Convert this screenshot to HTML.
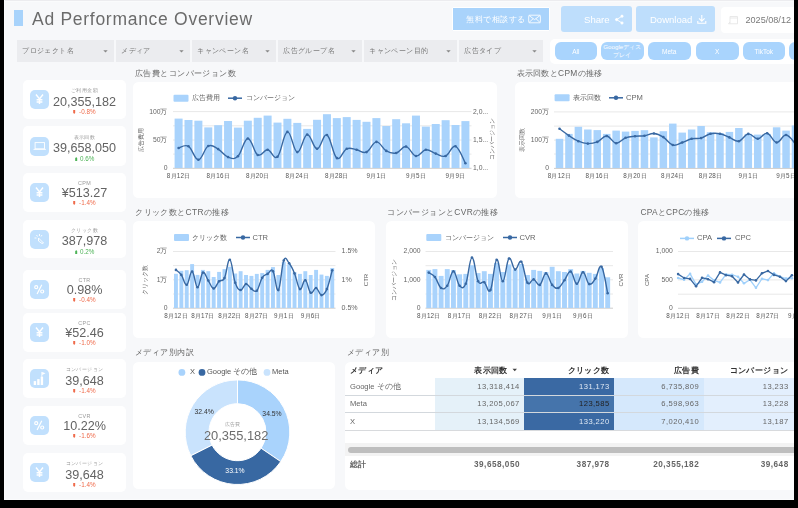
<!DOCTYPE html><html><head><meta charset="utf-8"><style>
html,body{margin:0;padding:0;}
body{width:798px;height:508px;position:relative;overflow:hidden;background:#f7f8fa;font-family:"Liberation Sans", sans-serif;}
div{box-sizing:border-box;}
svg{position:absolute;left:0;top:0;overflow:visible}
</style></head><body>
<div style="position:absolute;left:0px;top:0px;width:798px;height:1px;background:#ececef;border-radius:0px;"></div>
<div style="position:absolute;left:0px;top:1px;width:798px;height:1px;background:#fafbfc;border-radius:0px;"></div>
<div style="position:absolute;left:14px;top:10px;width:9px;height:16px;background:#a8d3fb;border-radius:0px;"></div>
<div style="position:absolute;left:452px;top:7px;width:98px;height:24px;background:#a9d3fb;border-radius:1px;border:1px solid #fff;"></div>
<svg width="798" height="508"><g fill="none" stroke="#fff" stroke-width="0.85"><rect x="528.7" y="15.2" width="11.7" height="7.6" rx="1"/><path d="M528.9 15.4 L534.55 19.6 L540.2 15.4 M528.9 22.6 L533.2 18.6 M540.2 22.6 L535.9 18.6"/></g></svg>
<div style="position:absolute;left:561px;top:6px;width:71px;height:26px;background:#bedefc;border-radius:3px;"></div>
<svg width="798" height="508"><g fill="#fff" stroke="#fff" stroke-width="0.9"><circle cx="622" cy="16.2" r="1.1"/><circle cx="616.6" cy="19.6" r="1.1"/><circle cx="622" cy="23" r="1.1"/><path d="M622 16.2 L616.6 19.6 L622 23" fill="none"/></g></svg>
<div style="position:absolute;left:636px;top:6px;width:79px;height:26px;background:#bedefc;border-radius:3px;"></div>
<svg width="798" height="508"><g fill="none" stroke="#fff" stroke-width="1.1"><path d="M701.8 15 V21 M699 18.3 L701.8 21.1 L704.6 18.3 M697.8 21 V23.3 H705.8 V21"/></g></svg>
<div style="position:absolute;left:721px;top:7px;width:80px;height:26px;background:#ffffff;border-radius:4px;"></div>
<svg width="798" height="508"><g fill="none" stroke="#e6e6e6" stroke-width="0.9"><path d="M730 16.5 H737.5 V23.8 H730 Z M730 18 H737.5 M730 22 L728.5 23.8 H730"/></g></svg>
<div style="position:absolute;left:17px;top:40px;width:97px;height:22.4px;background:#ebecef;border-radius:0px;"></div>
<svg width="798" height="508"><path d="M103.3 50.2 L107.7 50.2 L105.5 52.5 Z" fill="#888"/></svg>
<div style="position:absolute;left:116px;top:40px;width:74px;height:22.4px;background:#ebecef;border-radius:0px;"></div>
<svg width="798" height="508"><path d="M179.3 50.2 L183.7 50.2 L181.5 52.5 Z" fill="#888"/></svg>
<div style="position:absolute;left:192px;top:40px;width:84px;height:22.4px;background:#ebecef;border-radius:0px;"></div>
<svg width="798" height="508"><path d="M265.3 50.2 L269.7 50.2 L267.5 52.5 Z" fill="#888"/></svg>
<div style="position:absolute;left:278px;top:40px;width:84px;height:22.4px;background:#ebecef;border-radius:0px;"></div>
<svg width="798" height="508"><path d="M351.3 50.2 L355.7 50.2 L353.5 52.5 Z" fill="#888"/></svg>
<div style="position:absolute;left:364px;top:40px;width:93px;height:22.4px;background:#ebecef;border-radius:0px;"></div>
<svg width="798" height="508"><path d="M446.3 50.2 L450.7 50.2 L448.5 52.5 Z" fill="#888"/></svg>
<div style="position:absolute;left:459px;top:40px;width:84px;height:22.4px;background:#ebecef;border-radius:0px;"></div>
<svg width="798" height="508"><path d="M532.3 50.2 L536.7 50.2 L534.5 52.5 Z" fill="#888"/></svg>
<div style="position:absolute;left:550px;top:39px;width:250px;height:25px;background:#ffffff;border-radius:5px;"></div>
<div style="position:absolute;left:554.5px;top:42.3px;width:42.5px;height:18.2px;background:#a9d4fd;border-radius:6px;"></div>
<div style="position:absolute;left:601px;top:42.3px;width:42.5px;height:18.2px;background:#a9d4fd;border-radius:6px;"></div>
<div style="position:absolute;left:601px;top:42.6px;width:42.5px;text-align:center;font-size:6.2px;line-height:8.6px;color:#fff;white-space:nowrap;overflow:hidden;">Googleディス<br>プレイ</div>
<div style="position:absolute;left:648px;top:42.3px;width:42.5px;height:18.2px;background:#a9d4fd;border-radius:6px;"></div>
<div style="position:absolute;left:696px;top:42.3px;width:42.5px;height:18.2px;background:#a9d4fd;border-radius:6px;"></div>
<div style="position:absolute;left:742.5px;top:42.3px;width:42.5px;height:18.2px;background:#a9d4fd;border-radius:6px;"></div>
<div style="position:absolute;left:789px;top:42.3px;width:42.5px;height:18.2px;background:#a9d4fd;border-radius:6px;"></div>
<div style="position:absolute;left:23px;top:80px;width:103px;height:39px;background:#ffffff;border-radius:5px;"></div>
<div style="position:absolute;left:30px;top:90.0px;width:19px;height:19px;background:#c1e0fd;border-radius:5px;"></div>
<svg width="798" height="508"><g stroke="#fff" stroke-width="1.45" fill="none"><path d="M36.0 94.5 L39.5 98.9 L43.0 94.5 M39.5 98.9 V104.1 M36.6 99.7 H42.4 M36.6 102.0 H42.4"/></g></svg>
<div style="position:absolute;left:23px;top:126px;width:103px;height:40px;background:#ffffff;border-radius:5px;"></div>
<div style="position:absolute;left:30px;top:136.5px;width:19px;height:19px;background:#c1e0fd;border-radius:5px;"></div>
<svg width="798" height="508"><g stroke="#fff" stroke-width="0.9" fill="none"><rect x="35.1" y="142.6" width="9.4" height="6.2"/><path d="M33.5 149.4 H45.9"/></g></svg>
<div style="position:absolute;left:23px;top:173px;width:103px;height:39px;background:#ffffff;border-radius:5px;"></div>
<div style="position:absolute;left:30px;top:183.0px;width:19px;height:19px;background:#c1e0fd;border-radius:5px;"></div>
<svg width="798" height="508"><g stroke="#fff" stroke-width="1.45" fill="none"><path d="M36.0 187.5 L39.5 191.9 L43.0 187.5 M39.5 191.9 V197.1 M36.6 192.7 H42.4 M36.6 195.0 H42.4"/></g></svg>
<div style="position:absolute;left:23px;top:220px;width:103px;height:38px;background:#ffffff;border-radius:5px;"></div>
<div style="position:absolute;left:30px;top:229.5px;width:19px;height:19px;background:#c1e0fd;border-radius:5px;"></div>
<svg width="798" height="508"><g stroke="#fff" stroke-width="0.9" fill="none"><path d="M38.5 238.0 L43.5 243.0 L42.0 243.5 L38.5 241.0 Z M36.5 235.0 L37.5 236.5 M34.5 238.0 L36.5 238.0 M39.5 234.0 L39.5 236.0 M42.0 235.0 L41.0 236.5"/></g></svg>
<div style="position:absolute;left:23px;top:270px;width:103px;height:39px;background:#ffffff;border-radius:5px;"></div>
<div style="position:absolute;left:30px;top:280.0px;width:19px;height:19px;background:#c1e0fd;border-radius:5px;"></div>
<svg width="798" height="508"><g stroke="#fff" stroke-width="1.2" fill="none"><circle cx="36.2" cy="287.2" r="1.5"/><circle cx="42.2" cy="291.5" r="1.5"/><path d="M41.8 284.7 L37.1 294.1"/></g></svg>
<div style="position:absolute;left:23px;top:313px;width:103px;height:39px;background:#ffffff;border-radius:5px;"></div>
<div style="position:absolute;left:30px;top:323.0px;width:19px;height:19px;background:#c1e0fd;border-radius:5px;"></div>
<svg width="798" height="508"><g stroke="#fff" stroke-width="1.45" fill="none"><path d="M36.0 327.5 L39.5 331.9 L43.0 327.5 M39.5 331.9 V337.1 M36.6 332.7 H42.4 M36.6 335.0 H42.4"/></g></svg>
<div style="position:absolute;left:23px;top:359px;width:103px;height:39px;background:#ffffff;border-radius:5px;"></div>
<div style="position:absolute;left:30px;top:369.0px;width:19px;height:19px;background:#c1e0fd;border-radius:5px;"></div>
<svg width="798" height="508"><g fill="#fff"><rect x="33.7" y="381.1" width="2.4" height="3.9"/><rect x="37.2" y="379.1" width="2.4" height="5.9"/><rect x="40.7" y="376.7" width="2.4" height="8.3"/><rect x="41.4" y="371.9" width="0.9" height="5"/><path d="M42.1 371.9 L45.5 373.3 L42.1 374.9 Z"/></g></svg>
<div style="position:absolute;left:23px;top:406px;width:103px;height:39px;background:#ffffff;border-radius:5px;"></div>
<div style="position:absolute;left:30px;top:416.0px;width:19px;height:19px;background:#c1e0fd;border-radius:5px;"></div>
<svg width="798" height="508"><g stroke="#fff" stroke-width="1.2" fill="none"><circle cx="36.2" cy="423.2" r="1.5"/><circle cx="42.2" cy="427.5" r="1.5"/><path d="M41.8 420.7 L37.1 430.1"/></g></svg>
<div style="position:absolute;left:23px;top:453px;width:103px;height:39px;background:#ffffff;border-radius:5px;"></div>
<div style="position:absolute;left:30px;top:463.0px;width:19px;height:19px;background:#c1e0fd;border-radius:5px;"></div>
<svg width="798" height="508"><g stroke="#fff" stroke-width="1.45" fill="none"><path d="M36.0 467.5 L39.5 471.9 L43.0 467.5 M39.5 471.9 V477.1 M36.6 472.7 H42.4 M36.6 475.0 H42.4"/></g></svg>
<div style="position:absolute;left:133px;top:81.5px;width:363.5px;height:116.5px;background:#ffffff;border-radius:5.5px;"></div>
<div style="position:absolute;left:514.5px;top:81.5px;width:300px;height:116.5px;background:#ffffff;border-radius:5.5px;"></div>
<div style="position:absolute;left:133px;top:221px;width:242.3px;height:117.4px;background:#ffffff;border-radius:5.5px;"></div>
<div style="position:absolute;left:386px;top:221px;width:241.5px;height:117.4px;background:#ffffff;border-radius:5.5px;"></div>
<div style="position:absolute;left:638.3px;top:221px;width:200px;height:117.2px;background:#ffffff;border-radius:5.5px;"></div>
<div style="position:absolute;left:133px;top:361.6px;width:201.6px;height:127.8px;background:#ffffff;border-radius:5.5px;"></div>
<div style="position:absolute;left:345px;top:361.6px;width:460px;height:128.4px;background:#ffffff;border-radius:5.5px;"></div>
<div style="position:absolute;left:434.7px;top:378px;width:89px;height:52.2px;background:#e5f1f9;border-radius:0px;"></div>
<div style="position:absolute;left:523.7px;top:378px;width:90px;height:17.1px;background:#3a69a3;border-radius:0px;"></div>
<div style="position:absolute;left:523.7px;top:395.1px;width:90px;height:17.3px;background:#4574ab;border-radius:0px;"></div>
<div style="position:absolute;left:523.7px;top:412.4px;width:90px;height:17.8px;background:#3a69a3;border-radius:0px;"></div>
<div style="position:absolute;left:613.7px;top:378px;width:90.1px;height:52.2px;background:#d5e8fc;border-radius:0px;"></div>
<div style="position:absolute;left:703.8px;top:378px;width:100px;height:52.2px;background:#e3effd;border-radius:0px;"></div>
<div style="position:absolute;left:345px;top:394.6px;width:460px;height:1px;background:#d3d8dd;border-radius:0px;"></div>
<div style="position:absolute;left:345px;top:411.9px;width:460px;height:1px;background:#d3d8dd;border-radius:0px;"></div>
<div style="position:absolute;left:345px;top:429.7px;width:460px;height:1px;background:#d8dadd;border-radius:0px;"></div>
<svg width="798" height="508"><path d="M512.5 368.8 L517 368.8 L514.75 371.3 Z" fill="#444"/></svg>
<div style="position:absolute;left:345px;top:443px;width:460px;height:13px;background:#f3f3f3;border-radius:0px;"></div>
<div style="position:absolute;left:347.5px;top:446.5px;width:450px;height:6.5px;background:#bebebe;border-radius:3.2px;"></div>
<svg width="798" height="508"><rect x="173.5" y="94.7" width="15" height="7" rx="1" fill="#a9d3fc"/><line x1="228" y1="98.2" x2="242" y2="98.2" stroke="#3868a2" stroke-width="1.5"/><circle cx="235" cy="98.2" r="2.2" fill="#3868a2"/><line x1="173" y1="111.6" x2="471.5" y2="111.6" stroke="#e8e8e8" stroke-width="1"/><line x1="173" y1="125.8" x2="471.5" y2="125.8" stroke="#e8e8e8" stroke-width="1"/><line x1="173" y1="140" x2="471.5" y2="140" stroke="#e8e8e8" stroke-width="1"/><line x1="173" y1="154.1" x2="471.5" y2="154.1" stroke="#e8e8e8" stroke-width="1"/><line x1="173" y1="168.3" x2="471.5" y2="168.3" stroke="#ccc" stroke-width="1"/><rect x="174.60" y="118.60" width="8.00" height="49.40" fill="#a9d3fc"/><rect x="184.49" y="120.00" width="8.00" height="48.00" fill="#a9d3fc"/><rect x="194.38" y="120.70" width="8.00" height="47.30" fill="#a9d3fc"/><rect x="204.27" y="127.40" width="8.00" height="40.60" fill="#a9d3fc"/><rect x="214.16" y="125.20" width="8.00" height="42.80" fill="#a9d3fc"/><rect x="224.05" y="121.00" width="8.00" height="47.00" fill="#a9d3fc"/><rect x="233.94" y="127.60" width="8.00" height="40.40" fill="#a9d3fc"/><rect x="243.83" y="120.70" width="8.00" height="47.30" fill="#a9d3fc"/><rect x="253.72" y="117.80" width="8.00" height="50.20" fill="#a9d3fc"/><rect x="263.61" y="115.60" width="8.00" height="52.40" fill="#a9d3fc"/><rect x="273.50" y="122.60" width="8.00" height="45.40" fill="#a9d3fc"/><rect x="283.39" y="118.80" width="8.00" height="49.20" fill="#a9d3fc"/><rect x="293.28" y="122.90" width="8.00" height="45.10" fill="#a9d3fc"/><rect x="303.17" y="128.90" width="8.00" height="39.10" fill="#a9d3fc"/><rect x="313.06" y="119.80" width="8.00" height="48.20" fill="#a9d3fc"/><rect x="322.95" y="114.20" width="8.00" height="53.80" fill="#a9d3fc"/><rect x="332.84" y="118.10" width="8.00" height="49.90" fill="#a9d3fc"/><rect x="342.73" y="117.10" width="8.00" height="50.90" fill="#a9d3fc"/><rect x="352.62" y="119.90" width="8.00" height="48.10" fill="#a9d3fc"/><rect x="362.51" y="121.80" width="8.00" height="46.20" fill="#a9d3fc"/><rect x="372.40" y="118.10" width="8.00" height="49.90" fill="#a9d3fc"/><rect x="382.29" y="126.00" width="8.00" height="42.00" fill="#a9d3fc"/><rect x="392.18" y="119.20" width="8.00" height="48.80" fill="#a9d3fc"/><rect x="402.07" y="123.30" width="8.00" height="44.70" fill="#a9d3fc"/><rect x="411.96" y="115.60" width="8.00" height="52.40" fill="#a9d3fc"/><rect x="421.85" y="126.60" width="8.00" height="41.40" fill="#a9d3fc"/><rect x="431.74" y="124.00" width="8.00" height="44.00" fill="#a9d3fc"/><rect x="441.63" y="120.20" width="8.00" height="47.80" fill="#a9d3fc"/><rect x="451.52" y="125.00" width="8.00" height="43.00" fill="#a9d3fc"/><rect x="461.41" y="121.10" width="8.00" height="46.90" fill="#a9d3fc"/><path d="M178.60 148.00 C180.58 147.66 184.53 143.96 188.49 146.30 C192.45 148.64 194.42 159.76 198.38 159.70 C202.34 159.64 204.31 148.12 208.27 146.00 C212.23 143.88 214.20 146.88 218.16 149.10 C222.12 151.32 224.09 155.66 228.05 157.10 C232.01 158.54 233.98 160.02 237.94 156.30 C241.90 152.58 243.87 138.76 247.83 138.50 C251.79 138.24 253.76 152.74 257.72 155.00 C261.68 157.26 263.65 149.46 267.61 149.80 C271.57 150.14 273.54 160.28 277.50 156.70 C281.46 153.12 283.43 132.82 287.39 131.90 C291.35 130.98 293.32 151.56 297.28 152.10 C301.24 152.64 303.21 135.26 307.17 134.60 C311.13 133.94 313.10 148.72 317.06 148.80 C321.02 148.88 322.99 133.14 326.95 135.00 C330.91 136.86 332.88 155.34 336.84 158.10 C340.80 160.86 342.77 150.46 346.73 148.80 C350.69 147.14 352.66 149.14 356.62 149.80 C360.58 150.46 362.55 153.68 366.51 152.10 C370.47 150.52 372.44 142.14 376.40 141.90 C380.36 141.66 382.33 148.68 386.29 150.90 C390.25 153.12 392.22 153.86 396.18 153.00 C400.14 152.14 402.11 146.00 406.07 146.60 C410.03 147.20 412.00 155.36 415.96 156.00 C419.92 156.64 421.89 150.28 425.85 149.80 C429.81 149.32 431.78 152.36 435.74 153.60 C439.70 154.84 441.67 157.46 445.63 156.00 C449.59 154.54 451.56 144.86 455.52 146.30 C459.48 147.74 463.43 159.82 465.41 163.20" fill="none" stroke="#3868a2" stroke-width="1.4"/><circle cx="178.60" cy="148.00" r="1.3" fill="#3868a2"/><circle cx="188.49" cy="146.30" r="1.3" fill="#3868a2"/><circle cx="198.38" cy="159.70" r="1.3" fill="#3868a2"/><circle cx="208.27" cy="146.00" r="1.3" fill="#3868a2"/><circle cx="218.16" cy="149.10" r="1.3" fill="#3868a2"/><circle cx="228.05" cy="157.10" r="1.3" fill="#3868a2"/><circle cx="237.94" cy="156.30" r="1.3" fill="#3868a2"/><circle cx="247.83" cy="138.50" r="1.3" fill="#3868a2"/><circle cx="257.72" cy="155.00" r="1.3" fill="#3868a2"/><circle cx="267.61" cy="149.80" r="1.3" fill="#3868a2"/><circle cx="277.50" cy="156.70" r="1.3" fill="#3868a2"/><circle cx="287.39" cy="131.90" r="1.3" fill="#3868a2"/><circle cx="297.28" cy="152.10" r="1.3" fill="#3868a2"/><circle cx="307.17" cy="134.60" r="1.3" fill="#3868a2"/><circle cx="317.06" cy="148.80" r="1.3" fill="#3868a2"/><circle cx="326.95" cy="135.00" r="1.3" fill="#3868a2"/><circle cx="336.84" cy="158.10" r="1.3" fill="#3868a2"/><circle cx="346.73" cy="148.80" r="1.3" fill="#3868a2"/><circle cx="356.62" cy="149.80" r="1.3" fill="#3868a2"/><circle cx="366.51" cy="152.10" r="1.3" fill="#3868a2"/><circle cx="376.40" cy="141.90" r="1.3" fill="#3868a2"/><circle cx="386.29" cy="150.90" r="1.3" fill="#3868a2"/><circle cx="396.18" cy="153.00" r="1.3" fill="#3868a2"/><circle cx="406.07" cy="146.60" r="1.3" fill="#3868a2"/><circle cx="415.96" cy="156.00" r="1.3" fill="#3868a2"/><circle cx="425.85" cy="149.80" r="1.3" fill="#3868a2"/><circle cx="435.74" cy="153.60" r="1.3" fill="#3868a2"/><circle cx="445.63" cy="156.00" r="1.3" fill="#3868a2"/><circle cx="455.52" cy="146.30" r="1.3" fill="#3868a2"/><circle cx="465.41" cy="163.20" r="1.3" fill="#3868a2"/><rect x="554.6" y="94.3" width="15" height="7" rx="1" fill="#a9d3fc"/><line x1="609" y1="97.8" x2="623" y2="97.8" stroke="#3868a2" stroke-width="1.5"/><circle cx="616" cy="97.8" r="2.2" fill="#3868a2"/><line x1="554" y1="111.9" x2="800" y2="111.9" stroke="#e8e8e8" stroke-width="1"/><line x1="554" y1="126.1" x2="800" y2="126.1" stroke="#e8e8e8" stroke-width="1"/><line x1="554" y1="140.1" x2="800" y2="140.1" stroke="#e8e8e8" stroke-width="1"/><line x1="554" y1="154" x2="800" y2="154" stroke="#e8e8e8" stroke-width="1"/><line x1="554" y1="168.4" x2="800" y2="168.4" stroke="#ccc" stroke-width="1"/><rect x="555.75" y="138.80" width="7.50" height="29.20" fill="#a9d3fc"/><rect x="565.19" y="133.90" width="7.50" height="34.10" fill="#a9d3fc"/><rect x="574.63" y="126.80" width="7.50" height="41.20" fill="#a9d3fc"/><rect x="584.07" y="129.50" width="7.50" height="38.50" fill="#a9d3fc"/><rect x="593.51" y="130.10" width="7.50" height="37.90" fill="#a9d3fc"/><rect x="602.95" y="133.90" width="7.50" height="34.10" fill="#a9d3fc"/><rect x="612.39" y="130.60" width="7.50" height="37.40" fill="#a9d3fc"/><rect x="621.83" y="131.60" width="7.50" height="36.40" fill="#a9d3fc"/><rect x="631.27" y="130.90" width="7.50" height="37.10" fill="#a9d3fc"/><rect x="640.71" y="130.20" width="7.50" height="37.80" fill="#a9d3fc"/><rect x="650.15" y="137.40" width="7.50" height="30.60" fill="#a9d3fc"/><rect x="659.59" y="131.20" width="7.50" height="36.80" fill="#a9d3fc"/><rect x="669.03" y="123.60" width="7.50" height="44.40" fill="#a9d3fc"/><rect x="678.47" y="132.60" width="7.50" height="35.40" fill="#a9d3fc"/><rect x="687.91" y="129.50" width="7.50" height="38.50" fill="#a9d3fc"/><rect x="697.35" y="126.00" width="7.50" height="42.00" fill="#a9d3fc"/><rect x="706.79" y="132.20" width="7.50" height="35.80" fill="#a9d3fc"/><rect x="716.23" y="133.00" width="7.50" height="35.00" fill="#a9d3fc"/><rect x="725.67" y="131.90" width="7.50" height="36.10" fill="#a9d3fc"/><rect x="735.11" y="128.00" width="7.50" height="40.00" fill="#a9d3fc"/><rect x="744.55" y="133.90" width="7.50" height="34.10" fill="#a9d3fc"/><rect x="753.99" y="134.60" width="7.50" height="33.40" fill="#a9d3fc"/><rect x="763.43" y="133.90" width="7.50" height="34.10" fill="#a9d3fc"/><rect x="772.87" y="127.30" width="7.50" height="40.70" fill="#a9d3fc"/><rect x="782.31" y="130.60" width="7.50" height="37.40" fill="#a9d3fc"/><rect x="791.75" y="125.40" width="7.50" height="42.60" fill="#a9d3fc"/><path d="M559.50 128.80 C561.39 130.16 565.16 133.12 568.94 135.60 C572.72 138.08 574.60 139.60 578.38 141.20 C582.16 142.80 584.04 143.46 587.82 143.60 C591.60 143.74 593.48 143.42 597.26 141.90 C601.04 140.38 602.92 135.74 606.70 136.00 C610.48 136.26 612.36 142.84 616.14 143.20 C619.92 143.56 621.80 139.20 625.58 137.80 C629.36 136.40 631.24 136.62 635.02 136.20 C638.80 135.78 640.68 136.24 644.46 135.70 C648.24 135.16 650.12 133.22 653.90 133.50 C657.68 133.78 659.56 134.80 663.34 137.10 C667.12 139.40 669.00 143.92 672.78 145.00 C676.56 146.08 678.44 143.74 682.22 142.50 C686.00 141.26 687.88 139.68 691.66 138.80 C695.44 137.92 697.32 139.12 701.10 138.10 C704.88 137.08 706.76 134.58 710.54 133.70 C714.32 132.82 716.20 132.96 719.98 133.70 C723.76 134.44 725.64 135.90 729.42 137.40 C733.20 138.90 735.08 141.90 738.86 141.20 C742.64 140.50 744.52 134.38 748.30 133.90 C752.08 133.42 753.96 138.94 757.74 138.80 C761.52 138.66 763.40 132.46 767.18 133.20 C770.96 133.94 772.84 142.14 776.62 142.50 C780.40 142.86 782.28 134.70 786.06 135.00 C789.84 135.30 793.61 142.20 795.50 144.00" fill="none" stroke="#3868a2" stroke-width="1.4"/><circle cx="559.50" cy="128.80" r="1.3" fill="#3868a2"/><circle cx="568.94" cy="135.60" r="1.3" fill="#3868a2"/><circle cx="578.38" cy="141.20" r="1.3" fill="#3868a2"/><circle cx="587.82" cy="143.60" r="1.3" fill="#3868a2"/><circle cx="597.26" cy="141.90" r="1.3" fill="#3868a2"/><circle cx="606.70" cy="136.00" r="1.3" fill="#3868a2"/><circle cx="616.14" cy="143.20" r="1.3" fill="#3868a2"/><circle cx="625.58" cy="137.80" r="1.3" fill="#3868a2"/><circle cx="635.02" cy="136.20" r="1.3" fill="#3868a2"/><circle cx="644.46" cy="135.70" r="1.3" fill="#3868a2"/><circle cx="653.90" cy="133.50" r="1.3" fill="#3868a2"/><circle cx="663.34" cy="137.10" r="1.3" fill="#3868a2"/><circle cx="672.78" cy="145.00" r="1.3" fill="#3868a2"/><circle cx="682.22" cy="142.50" r="1.3" fill="#3868a2"/><circle cx="691.66" cy="138.80" r="1.3" fill="#3868a2"/><circle cx="701.10" cy="138.10" r="1.3" fill="#3868a2"/><circle cx="710.54" cy="133.70" r="1.3" fill="#3868a2"/><circle cx="719.98" cy="133.70" r="1.3" fill="#3868a2"/><circle cx="729.42" cy="137.40" r="1.3" fill="#3868a2"/><circle cx="738.86" cy="141.20" r="1.3" fill="#3868a2"/><circle cx="748.30" cy="133.90" r="1.3" fill="#3868a2"/><circle cx="757.74" cy="138.80" r="1.3" fill="#3868a2"/><circle cx="767.18" cy="133.20" r="1.3" fill="#3868a2"/><circle cx="776.62" cy="142.50" r="1.3" fill="#3868a2"/><circle cx="786.06" cy="135.00" r="1.3" fill="#3868a2"/><circle cx="795.50" cy="144.00" r="1.3" fill="#3868a2"/><rect x="174" y="234.0" width="15" height="7" rx="1" fill="#a9d3fc"/><line x1="236" y1="237.5" x2="250" y2="237.5" stroke="#3868a2" stroke-width="1.5"/><circle cx="243" cy="237.5" r="2.2" fill="#3868a2"/><line x1="173" y1="251.5" x2="335.5" y2="251.5" stroke="#e8e8e8" stroke-width="1"/><line x1="173" y1="265.6" x2="335.5" y2="265.6" stroke="#e8e8e8" stroke-width="1"/><line x1="173" y1="279.8" x2="335.5" y2="279.8" stroke="#e8e8e8" stroke-width="1"/><line x1="173" y1="294" x2="335.5" y2="294" stroke="#e8e8e8" stroke-width="1"/><line x1="173" y1="308.2" x2="335.5" y2="308.2" stroke="#ccc" stroke-width="1"/><rect x="174.00" y="273.80" width="3.90" height="34.20" fill="#a9d3fc"/><rect x="179.39" y="270.80" width="3.90" height="37.20" fill="#a9d3fc"/><rect x="184.78" y="270.20" width="3.90" height="37.80" fill="#a9d3fc"/><rect x="190.17" y="264.10" width="3.90" height="43.90" fill="#a9d3fc"/><rect x="195.56" y="274.90" width="3.90" height="33.10" fill="#a9d3fc"/><rect x="200.95" y="269.90" width="3.90" height="38.10" fill="#a9d3fc"/><rect x="206.34" y="271.20" width="3.90" height="36.80" fill="#a9d3fc"/><rect x="211.73" y="277.00" width="3.90" height="31.00" fill="#a9d3fc"/><rect x="217.12" y="271.90" width="3.90" height="36.10" fill="#a9d3fc"/><rect x="222.51" y="269.10" width="3.90" height="38.90" fill="#a9d3fc"/><rect x="227.90" y="266.70" width="3.90" height="41.30" fill="#a9d3fc"/><rect x="233.29" y="273.50" width="3.90" height="34.50" fill="#a9d3fc"/><rect x="238.68" y="271.20" width="3.90" height="36.80" fill="#a9d3fc"/><rect x="244.07" y="275.00" width="3.90" height="33.00" fill="#a9d3fc"/><rect x="249.46" y="275.90" width="3.90" height="32.10" fill="#a9d3fc"/><rect x="254.85" y="273.90" width="3.90" height="34.10" fill="#a9d3fc"/><rect x="260.24" y="273.10" width="3.90" height="34.90" fill="#a9d3fc"/><rect x="265.63" y="269.90" width="3.90" height="38.10" fill="#a9d3fc"/><rect x="271.02" y="267.10" width="3.90" height="40.90" fill="#a9d3fc"/><rect x="276.41" y="275.00" width="3.90" height="33.00" fill="#a9d3fc"/><rect x="281.80" y="262.00" width="3.90" height="46.00" fill="#a9d3fc"/><rect x="287.19" y="264.40" width="3.90" height="43.60" fill="#a9d3fc"/><rect x="292.58" y="272.30" width="3.90" height="35.70" fill="#a9d3fc"/><rect x="297.97" y="273.90" width="3.90" height="34.10" fill="#a9d3fc"/><rect x="303.36" y="271.20" width="3.90" height="36.80" fill="#a9d3fc"/><rect x="308.75" y="275.00" width="3.90" height="33.00" fill="#a9d3fc"/><rect x="314.14" y="269.90" width="3.90" height="38.10" fill="#a9d3fc"/><rect x="319.53" y="274.60" width="3.90" height="33.40" fill="#a9d3fc"/><rect x="324.92" y="275.90" width="3.90" height="32.10" fill="#a9d3fc"/><rect x="330.31" y="268.00" width="3.90" height="40.00" fill="#a9d3fc"/><path d="M175.95 269.90 C177.03 270.90 179.18 271.92 181.34 274.90 C183.50 277.88 184.57 285.48 186.73 284.80 C188.89 284.12 189.96 271.02 192.12 271.50 C194.28 271.98 195.35 286.98 197.51 287.20 C199.67 287.42 200.74 273.92 202.90 272.60 C205.06 271.28 206.13 277.42 208.29 280.60 C210.45 283.78 211.52 288.38 213.68 288.50 C215.84 288.62 216.91 283.28 219.07 281.20 C221.23 279.12 222.30 282.40 224.46 278.10 C226.62 273.80 227.69 258.76 229.85 259.70 C232.01 260.64 233.08 276.74 235.24 282.80 C237.40 288.86 238.47 289.76 240.63 290.00 C242.79 290.24 243.86 284.24 246.02 284.00 C248.18 283.76 249.25 287.46 251.41 288.80 C253.57 290.14 254.64 292.90 256.80 290.70 C258.96 288.50 260.03 281.16 262.19 277.80 C264.35 274.44 265.42 275.22 267.58 273.90 C269.74 272.58 270.81 267.96 272.97 271.20 C275.13 274.44 276.20 292.24 278.36 290.10 C280.52 287.96 281.59 265.86 283.75 260.50 C285.91 255.14 286.98 260.72 289.14 263.30 C291.30 265.88 292.37 268.24 294.53 273.40 C296.69 278.56 297.76 287.74 299.92 289.10 C302.08 290.46 303.15 279.46 305.31 280.20 C307.47 280.94 308.54 291.24 310.70 292.80 C312.86 294.36 313.93 287.54 316.09 288.00 C318.25 288.46 319.32 294.88 321.48 295.10 C323.64 295.32 324.71 294.08 326.87 289.10 C329.03 284.12 331.18 273.98 332.26 270.20" fill="none" stroke="#3868a2" stroke-width="1.4"/><circle cx="175.95" cy="269.90" r="1.3" fill="#3868a2"/><circle cx="181.34" cy="274.90" r="1.3" fill="#3868a2"/><circle cx="186.73" cy="284.80" r="1.3" fill="#3868a2"/><circle cx="192.12" cy="271.50" r="1.3" fill="#3868a2"/><circle cx="197.51" cy="287.20" r="1.3" fill="#3868a2"/><circle cx="202.90" cy="272.60" r="1.3" fill="#3868a2"/><circle cx="208.29" cy="280.60" r="1.3" fill="#3868a2"/><circle cx="213.68" cy="288.50" r="1.3" fill="#3868a2"/><circle cx="219.07" cy="281.20" r="1.3" fill="#3868a2"/><circle cx="224.46" cy="278.10" r="1.3" fill="#3868a2"/><circle cx="229.85" cy="259.70" r="1.3" fill="#3868a2"/><circle cx="235.24" cy="282.80" r="1.3" fill="#3868a2"/><circle cx="240.63" cy="290.00" r="1.3" fill="#3868a2"/><circle cx="246.02" cy="284.00" r="1.3" fill="#3868a2"/><circle cx="251.41" cy="288.80" r="1.3" fill="#3868a2"/><circle cx="256.80" cy="290.70" r="1.3" fill="#3868a2"/><circle cx="262.19" cy="277.80" r="1.3" fill="#3868a2"/><circle cx="267.58" cy="273.90" r="1.3" fill="#3868a2"/><circle cx="272.97" cy="271.20" r="1.3" fill="#3868a2"/><circle cx="278.36" cy="290.10" r="1.3" fill="#3868a2"/><circle cx="283.75" cy="260.50" r="1.3" fill="#3868a2"/><circle cx="289.14" cy="263.30" r="1.3" fill="#3868a2"/><circle cx="294.53" cy="273.40" r="1.3" fill="#3868a2"/><circle cx="299.92" cy="289.10" r="1.3" fill="#3868a2"/><circle cx="305.31" cy="280.20" r="1.3" fill="#3868a2"/><circle cx="310.70" cy="292.80" r="1.3" fill="#3868a2"/><circle cx="316.09" cy="288.00" r="1.3" fill="#3868a2"/><circle cx="321.48" cy="295.10" r="1.3" fill="#3868a2"/><circle cx="326.87" cy="289.10" r="1.3" fill="#3868a2"/><circle cx="332.26" cy="270.20" r="1.3" fill="#3868a2"/><rect x="426.3" y="234.0" width="15" height="7" rx="1" fill="#a9d3fc"/><line x1="503" y1="237.5" x2="517" y2="237.5" stroke="#3868a2" stroke-width="1.5"/><circle cx="510" cy="237.5" r="2.2" fill="#3868a2"/><line x1="425.5" y1="251.5" x2="613" y2="251.5" stroke="#e8e8e8" stroke-width="1"/><line x1="425.5" y1="265.7" x2="613" y2="265.7" stroke="#e8e8e8" stroke-width="1"/><line x1="425.5" y1="279.8" x2="613" y2="279.8" stroke="#e8e8e8" stroke-width="1"/><line x1="425.5" y1="294" x2="613" y2="294" stroke="#e8e8e8" stroke-width="1"/><line x1="425.5" y1="308.2" x2="613" y2="308.2" stroke="#ccc" stroke-width="1"/><rect x="426.30" y="269.90" width="4.90" height="38.10" fill="#a9d3fc"/><rect x="432.47" y="269.10" width="4.90" height="38.90" fill="#a9d3fc"/><rect x="438.64" y="275.90" width="4.90" height="32.10" fill="#a9d3fc"/><rect x="444.81" y="269.10" width="4.90" height="38.90" fill="#a9d3fc"/><rect x="450.98" y="270.20" width="4.90" height="37.80" fill="#a9d3fc"/><rect x="457.15" y="274.30" width="4.90" height="33.70" fill="#a9d3fc"/><rect x="463.32" y="273.90" width="4.90" height="34.10" fill="#a9d3fc"/><rect x="469.49" y="265.20" width="4.90" height="42.80" fill="#a9d3fc"/><rect x="475.66" y="273.10" width="4.90" height="34.90" fill="#a9d3fc"/><rect x="481.83" y="271.20" width="4.90" height="36.80" fill="#a9d3fc"/><rect x="488.00" y="273.90" width="4.90" height="34.10" fill="#a9d3fc"/><rect x="494.17" y="263.00" width="4.90" height="45.00" fill="#a9d3fc"/><rect x="500.34" y="272.00" width="4.90" height="36.00" fill="#a9d3fc"/><rect x="506.51" y="264.50" width="4.90" height="43.50" fill="#a9d3fc"/><rect x="512.68" y="269.50" width="4.90" height="38.50" fill="#a9d3fc"/><rect x="518.85" y="264.00" width="4.90" height="44.00" fill="#a9d3fc"/><rect x="525.02" y="275.00" width="4.90" height="33.00" fill="#a9d3fc"/><rect x="531.19" y="269.90" width="4.90" height="38.10" fill="#a9d3fc"/><rect x="537.36" y="270.90" width="4.90" height="37.10" fill="#a9d3fc"/><rect x="543.53" y="272.00" width="4.90" height="36.00" fill="#a9d3fc"/><rect x="549.70" y="266.80" width="4.90" height="41.20" fill="#a9d3fc"/><rect x="555.87" y="271.20" width="4.90" height="36.80" fill="#a9d3fc"/><rect x="562.04" y="272.00" width="4.90" height="36.00" fill="#a9d3fc"/><rect x="568.21" y="269.10" width="4.90" height="38.90" fill="#a9d3fc"/><rect x="574.38" y="273.50" width="4.90" height="34.50" fill="#a9d3fc"/><rect x="580.55" y="270.90" width="4.90" height="37.10" fill="#a9d3fc"/><rect x="586.72" y="272.80" width="4.90" height="35.20" fill="#a9d3fc"/><rect x="592.89" y="273.90" width="4.90" height="34.10" fill="#a9d3fc"/><rect x="599.06" y="268.00" width="4.90" height="40.00" fill="#a9d3fc"/><rect x="605.23" y="277.30" width="4.90" height="30.70" fill="#a9d3fc"/><path d="M428.75 272.60 C429.98 273.48 432.45 273.92 434.92 277.00 C437.39 280.08 438.62 286.26 441.09 288.00 C443.56 289.74 444.79 289.06 447.26 285.70 C449.73 282.34 450.96 271.20 453.43 271.20 C455.90 271.20 457.13 283.18 459.60 285.70 C462.07 288.22 463.30 289.42 465.77 283.80 C468.24 278.18 469.47 258.10 471.94 257.60 C474.41 257.10 475.64 276.38 478.11 281.30 C480.58 286.22 481.81 280.44 484.28 282.20 C486.75 283.96 487.98 294.60 490.45 290.10 C492.92 285.60 494.15 261.46 496.62 259.70 C499.09 257.94 500.32 281.52 502.79 281.30 C505.26 281.08 506.49 260.94 508.96 258.60 C511.43 256.26 512.66 268.98 515.13 269.60 C517.60 270.22 518.83 259.06 521.30 261.70 C523.77 264.34 525.00 279.26 527.47 282.80 C529.94 286.34 531.17 278.98 533.64 279.40 C536.11 279.82 537.34 286.10 539.81 284.90 C542.28 283.70 543.51 273.40 545.98 273.40 C548.45 273.40 549.68 281.98 552.15 284.90 C554.62 287.82 555.85 288.94 558.32 288.00 C560.79 287.06 562.02 283.50 564.49 280.20 C566.96 276.90 568.19 270.78 570.66 271.50 C573.13 272.22 574.36 283.64 576.83 283.80 C579.30 283.96 580.53 272.24 583.00 272.30 C585.47 272.36 586.70 282.84 589.17 284.10 C591.64 285.36 592.87 282.06 595.34 278.60 C597.81 275.14 599.04 263.88 601.51 266.80 C603.98 269.72 606.45 287.92 607.68 293.20" fill="none" stroke="#3868a2" stroke-width="1.4"/><circle cx="428.75" cy="272.60" r="1.3" fill="#3868a2"/><circle cx="434.92" cy="277.00" r="1.3" fill="#3868a2"/><circle cx="441.09" cy="288.00" r="1.3" fill="#3868a2"/><circle cx="447.26" cy="285.70" r="1.3" fill="#3868a2"/><circle cx="453.43" cy="271.20" r="1.3" fill="#3868a2"/><circle cx="459.60" cy="285.70" r="1.3" fill="#3868a2"/><circle cx="465.77" cy="283.80" r="1.3" fill="#3868a2"/><circle cx="471.94" cy="257.60" r="1.3" fill="#3868a2"/><circle cx="478.11" cy="281.30" r="1.3" fill="#3868a2"/><circle cx="484.28" cy="282.20" r="1.3" fill="#3868a2"/><circle cx="490.45" cy="290.10" r="1.3" fill="#3868a2"/><circle cx="496.62" cy="259.70" r="1.3" fill="#3868a2"/><circle cx="502.79" cy="281.30" r="1.3" fill="#3868a2"/><circle cx="508.96" cy="258.60" r="1.3" fill="#3868a2"/><circle cx="515.13" cy="269.60" r="1.3" fill="#3868a2"/><circle cx="521.30" cy="261.70" r="1.3" fill="#3868a2"/><circle cx="527.47" cy="282.80" r="1.3" fill="#3868a2"/><circle cx="533.64" cy="279.40" r="1.3" fill="#3868a2"/><circle cx="539.81" cy="284.90" r="1.3" fill="#3868a2"/><circle cx="545.98" cy="273.40" r="1.3" fill="#3868a2"/><circle cx="552.15" cy="284.90" r="1.3" fill="#3868a2"/><circle cx="558.32" cy="288.00" r="1.3" fill="#3868a2"/><circle cx="564.49" cy="280.20" r="1.3" fill="#3868a2"/><circle cx="570.66" cy="271.50" r="1.3" fill="#3868a2"/><circle cx="576.83" cy="283.80" r="1.3" fill="#3868a2"/><circle cx="583.00" cy="272.30" r="1.3" fill="#3868a2"/><circle cx="589.17" cy="284.10" r="1.3" fill="#3868a2"/><circle cx="595.34" cy="278.60" r="1.3" fill="#3868a2"/><circle cx="601.51" cy="266.80" r="1.3" fill="#3868a2"/><circle cx="607.68" cy="293.20" r="1.3" fill="#3868a2"/><line x1="680" y1="238.4" x2="694" y2="238.4" stroke="#9fd0fb" stroke-width="1.5"/><circle cx="687" cy="238.4" r="2.2" fill="#9fd0fb"/><line x1="717" y1="238.4" x2="731" y2="238.4" stroke="#3868a2" stroke-width="1.5"/><circle cx="724" cy="238.4" r="2.2" fill="#3868a2"/><line x1="678" y1="251.5" x2="792.7" y2="251.5" stroke="#e8e8e8" stroke-width="1"/><line x1="678" y1="265.9" x2="792.7" y2="265.9" stroke="#e8e8e8" stroke-width="1"/><line x1="678" y1="279.9" x2="792.7" y2="279.9" stroke="#e8e8e8" stroke-width="1"/><line x1="678" y1="294.2" x2="792.7" y2="294.2" stroke="#e8e8e8" stroke-width="1"/><line x1="678" y1="308.3" x2="792.7" y2="308.3" stroke="#ccc" stroke-width="1"/><polyline points="678.10,278.00 684.09,279.70 690.08,273.90 696.07,284.40 702.06,281.80 708.05,275.60 714.04,280.30 720.03,282.40 726.02,274.30 732.01,274.70 738.00,276.70 743.99,283.30 749.98,279.80 755.97,287.80 761.96,278.70 767.95,280.10 773.94,273.20 779.93,276.70 785.92,278.50 791.91,278.20" fill="none" stroke="#9fd0fb" stroke-width="1.3"/><circle cx="678.10" cy="278.00" r="1.3" fill="#9fd0fb"/><circle cx="684.09" cy="279.70" r="1.3" fill="#9fd0fb"/><circle cx="690.08" cy="273.90" r="1.3" fill="#9fd0fb"/><circle cx="696.07" cy="284.40" r="1.3" fill="#9fd0fb"/><circle cx="702.06" cy="281.80" r="1.3" fill="#9fd0fb"/><circle cx="708.05" cy="275.60" r="1.3" fill="#9fd0fb"/><circle cx="714.04" cy="280.30" r="1.3" fill="#9fd0fb"/><circle cx="720.03" cy="282.40" r="1.3" fill="#9fd0fb"/><circle cx="726.02" cy="274.30" r="1.3" fill="#9fd0fb"/><circle cx="732.01" cy="274.70" r="1.3" fill="#9fd0fb"/><circle cx="738.00" cy="276.70" r="1.3" fill="#9fd0fb"/><circle cx="743.99" cy="283.30" r="1.3" fill="#9fd0fb"/><circle cx="749.98" cy="279.80" r="1.3" fill="#9fd0fb"/><circle cx="755.97" cy="287.80" r="1.3" fill="#9fd0fb"/><circle cx="761.96" cy="278.70" r="1.3" fill="#9fd0fb"/><circle cx="767.95" cy="280.10" r="1.3" fill="#9fd0fb"/><circle cx="773.94" cy="273.20" r="1.3" fill="#9fd0fb"/><circle cx="779.93" cy="276.70" r="1.3" fill="#9fd0fb"/><circle cx="785.92" cy="278.50" r="1.3" fill="#9fd0fb"/><circle cx="791.91" cy="278.20" r="1.3" fill="#9fd0fb"/><polyline points="678.10,274.10 684.09,278.00 690.08,278.90 696.07,286.30 702.06,277.80 708.05,279.20 714.04,282.20 720.03,272.40 726.02,275.20 732.01,276.20 738.00,282.50 743.99,274.50 749.98,279.40 755.97,280.40 761.96,273.30 767.95,271.00 773.94,274.90 779.93,276.70 785.92,281.10 791.91,275.20" fill="none" stroke="#3868a2" stroke-width="1.3"/><circle cx="678.10" cy="274.10" r="1.3" fill="#3868a2"/><circle cx="684.09" cy="278.00" r="1.3" fill="#3868a2"/><circle cx="690.08" cy="278.90" r="1.3" fill="#3868a2"/><circle cx="696.07" cy="286.30" r="1.3" fill="#3868a2"/><circle cx="702.06" cy="277.80" r="1.3" fill="#3868a2"/><circle cx="708.05" cy="279.20" r="1.3" fill="#3868a2"/><circle cx="714.04" cy="282.20" r="1.3" fill="#3868a2"/><circle cx="720.03" cy="272.40" r="1.3" fill="#3868a2"/><circle cx="726.02" cy="275.20" r="1.3" fill="#3868a2"/><circle cx="732.01" cy="276.20" r="1.3" fill="#3868a2"/><circle cx="738.00" cy="282.50" r="1.3" fill="#3868a2"/><circle cx="743.99" cy="274.50" r="1.3" fill="#3868a2"/><circle cx="749.98" cy="279.40" r="1.3" fill="#3868a2"/><circle cx="755.97" cy="280.40" r="1.3" fill="#3868a2"/><circle cx="761.96" cy="273.30" r="1.3" fill="#3868a2"/><circle cx="767.95" cy="271.00" r="1.3" fill="#3868a2"/><circle cx="773.94" cy="274.90" r="1.3" fill="#3868a2"/><circle cx="779.93" cy="276.70" r="1.3" fill="#3868a2"/><circle cx="785.92" cy="281.10" r="1.3" fill="#3868a2"/><circle cx="791.91" cy="275.20" r="1.3" fill="#3868a2"/><path d="M237.50 379.90 A52.3 52.3 0 0 1 280.76 461.60 L261.07 448.22 A28.5 28.5 0 0 0 237.50 403.70 Z" fill="#a9d3fc" stroke="#fff" stroke-width="1"/><path d="M280.76 461.60 A52.3 52.3 0 0 1 190.75 455.65 L212.03 444.98 A28.5 28.5 0 0 0 261.07 448.22 Z" fill="#3868a2" stroke="#fff" stroke-width="1"/><path d="M190.75 455.65 A52.3 52.3 0 0 1 237.50 379.90 L237.50 403.70 A28.5 28.5 0 0 0 212.03 444.98 Z" fill="#c9e3fd" stroke="#fff" stroke-width="1"/><circle cx="181.9" cy="372.4" r="3.4" fill="#a9d3fc"/><circle cx="202" cy="372.4" r="3.4" fill="#3868a2"/><circle cx="267" cy="372.4" r="3.4" fill="#c9e3fd"/></svg>
<div style="position:absolute;left:0;top:0;width:798px;height:508px;will-change:transform;">
<div style="position:absolute;left:32px;top:-1.5px;height:40px;line-height:40px;font-size:17.5px;color:#6b6b6b;font-weight:normal;white-space:nowrap;letter-spacing:0.72px;">Ad Performance Overview</div>
<div style="position:absolute;left:466px;top:-1.0px;height:40px;line-height:40px;font-size:8.4px;color:#ffffff;font-weight:normal;white-space:nowrap;letter-spacing:0.5px;">無料で相談する</div>
<div style="position:absolute;left:584px;top:-0.5px;height:40px;line-height:40px;font-size:9.6px;color:#ffffff;font-weight:normal;white-space:nowrap;">Share</div>
<div style="position:absolute;left:650px;top:-0.5px;height:40px;line-height:40px;font-size:9.5px;color:#ffffff;font-weight:normal;white-space:nowrap;">Download</div>
<div style="position:absolute;left:745.5px;top:0.0px;height:40px;line-height:40px;font-size:9.1px;color:#7a7a7a;font-weight:normal;white-space:nowrap;">2025/08/12</div>
<div style="position:absolute;left:22.2px;top:31.200000000000003px;height:40px;line-height:40px;font-size:7.3px;color:#777;font-weight:normal;white-space:nowrap;letter-spacing:0.4px;">プロジェクト名</div>
<div style="position:absolute;left:121.2px;top:31.200000000000003px;height:40px;line-height:40px;font-size:7.3px;color:#777;font-weight:normal;white-space:nowrap;letter-spacing:0.4px;">メディア</div>
<div style="position:absolute;left:197.2px;top:31.200000000000003px;height:40px;line-height:40px;font-size:7.3px;color:#777;font-weight:normal;white-space:nowrap;letter-spacing:0.4px;">キャンペーン名</div>
<div style="position:absolute;left:283.2px;top:31.200000000000003px;height:40px;line-height:40px;font-size:7.3px;color:#777;font-weight:normal;white-space:nowrap;letter-spacing:0.4px;">広告グループ名</div>
<div style="position:absolute;left:369.2px;top:31.200000000000003px;height:40px;line-height:40px;font-size:7.3px;color:#777;font-weight:normal;white-space:nowrap;letter-spacing:0.4px;">キャンペーン目的</div>
<div style="position:absolute;left:464.2px;top:31.200000000000003px;height:40px;line-height:40px;font-size:7.3px;color:#777;font-weight:normal;white-space:nowrap;letter-spacing:0.4px;">広告タイプ</div>
<div style="position:absolute;left:275.75px;width:600px;text-align:center;top:31.5px;height:40px;line-height:40px;font-size:6.5px;color:#ffffff;font-weight:normal;white-space:nowrap;">All</div>
<div style="position:absolute;left:369.25px;width:600px;text-align:center;top:31.5px;height:40px;line-height:40px;font-size:6.5px;color:#ffffff;font-weight:normal;white-space:nowrap;">Meta</div>
<div style="position:absolute;left:417.25px;width:600px;text-align:center;top:31.5px;height:40px;line-height:40px;font-size:6.5px;color:#ffffff;font-weight:normal;white-space:nowrap;">X</div>
<div style="position:absolute;left:463.75px;width:600px;text-align:center;top:31.5px;height:40px;line-height:40px;font-size:6.5px;color:#ffffff;font-weight:normal;white-space:nowrap;">TikTok</div>
<div style="position:absolute;left:-215.5px;width:600px;text-align:center;top:70.3px;height:40px;line-height:40px;font-size:5.4px;color:#999;font-weight:normal;white-space:nowrap;letter-spacing:0.35px;">ご利用金額</div>
<div style="position:absolute;left:-215.5px;width:600px;text-align:center;top:81.6px;height:40px;line-height:40px;font-size:12.6px;color:#636363;font-weight:normal;white-space:nowrap;">20,355,182</div>
<div style="position:absolute;left:-215.5px;width:600px;text-align:center;top:92.2px;height:40px;line-height:40px;font-size:6.3px;color:#ef6a4a;font-weight:normal;white-space:nowrap;"><svg width="2.4" height="4" viewBox="0 0 2.4 4" style="position:static;display:inline-block;vertical-align:baseline;margin-right:3.2px;overflow:visible"><path d="M0.2 0 V2.4 H0 L1.2 4 L2.4 2.4 H2.2 V0 Z" fill="#ef6a4a"/></svg>-0.8%</div>
<div style="position:absolute;left:-215.5px;width:600px;text-align:center;top:116.80000000000001px;height:40px;line-height:40px;font-size:5.4px;color:#999;font-weight:normal;white-space:nowrap;letter-spacing:0.35px;">表示回数</div>
<div style="position:absolute;left:-215.5px;width:600px;text-align:center;top:128.1px;height:40px;line-height:40px;font-size:12.6px;color:#636363;font-weight:normal;white-space:nowrap;">39,658,050</div>
<div style="position:absolute;left:-215.5px;width:600px;text-align:center;top:138.7px;height:40px;line-height:40px;font-size:6.3px;color:#4db357;font-weight:normal;white-space:nowrap;"><svg width="2.4" height="4" viewBox="0 0 2.4 4" style="position:static;display:inline-block;vertical-align:baseline;margin-right:3.2px;overflow:visible"><path d="M0.2 4 V1.6 H0 L1.2 0 L2.4 1.6 H2.2 V4 Z" fill="#4db357"/></svg>0.6%</div>
<div style="position:absolute;left:-215.5px;width:600px;text-align:center;top:162.7px;height:40px;line-height:40px;font-size:5.4px;color:#999;font-weight:normal;white-space:nowrap;letter-spacing:0.35px;">CPM</div>
<div style="position:absolute;left:-215.5px;width:600px;text-align:center;top:172.75px;height:40px;line-height:40px;font-size:12.6px;color:#636363;font-weight:normal;white-space:nowrap;">¥513.27</div>
<div style="position:absolute;left:-215.5px;width:600px;text-align:center;top:183.4px;height:40px;line-height:40px;font-size:6.3px;color:#ef6a4a;font-weight:normal;white-space:nowrap;"><svg width="2.4" height="4" viewBox="0 0 2.4 4" style="position:static;display:inline-block;vertical-align:baseline;margin-right:3.2px;overflow:visible"><path d="M0.2 0 V2.4 H0 L1.2 4 L2.4 2.4 H2.2 V0 Z" fill="#ef6a4a"/></svg>-1.4%</div>
<div style="position:absolute;left:-215.5px;width:600px;text-align:center;top:209.8px;height:40px;line-height:40px;font-size:5.4px;color:#999;font-weight:normal;white-space:nowrap;letter-spacing:0.35px;">クリック数</div>
<div style="position:absolute;left:-215.5px;width:600px;text-align:center;top:221.1px;height:40px;line-height:40px;font-size:12.6px;color:#636363;font-weight:normal;white-space:nowrap;">387,978</div>
<div style="position:absolute;left:-215.5px;width:600px;text-align:center;top:231.7px;height:40px;line-height:40px;font-size:6.3px;color:#4db357;font-weight:normal;white-space:nowrap;"><svg width="2.4" height="4" viewBox="0 0 2.4 4" style="position:static;display:inline-block;vertical-align:baseline;margin-right:3.2px;overflow:visible"><path d="M0.2 4 V1.6 H0 L1.2 0 L2.4 1.6 H2.2 V4 Z" fill="#4db357"/></svg>0.2%</div>
<div style="position:absolute;left:-215.5px;width:600px;text-align:center;top:259.7px;height:40px;line-height:40px;font-size:5.4px;color:#999;font-weight:normal;white-space:nowrap;letter-spacing:0.35px;">CTR</div>
<div style="position:absolute;left:-215.5px;width:600px;text-align:center;top:269.75px;height:40px;line-height:40px;font-size:12.6px;color:#636363;font-weight:normal;white-space:nowrap;">0.98%</div>
<div style="position:absolute;left:-215.5px;width:600px;text-align:center;top:280.4px;height:40px;line-height:40px;font-size:6.3px;color:#ef6a4a;font-weight:normal;white-space:nowrap;"><svg width="2.4" height="4" viewBox="0 0 2.4 4" style="position:static;display:inline-block;vertical-align:baseline;margin-right:3.2px;overflow:visible"><path d="M0.2 0 V2.4 H0 L1.2 4 L2.4 2.4 H2.2 V0 Z" fill="#ef6a4a"/></svg>-0.4%</div>
<div style="position:absolute;left:-215.5px;width:600px;text-align:center;top:302.7px;height:40px;line-height:40px;font-size:5.4px;color:#999;font-weight:normal;white-space:nowrap;letter-spacing:0.35px;">CPC</div>
<div style="position:absolute;left:-215.5px;width:600px;text-align:center;top:312.75px;height:40px;line-height:40px;font-size:12.6px;color:#636363;font-weight:normal;white-space:nowrap;">¥52.46</div>
<div style="position:absolute;left:-215.5px;width:600px;text-align:center;top:323.4px;height:40px;line-height:40px;font-size:6.3px;color:#ef6a4a;font-weight:normal;white-space:nowrap;"><svg width="2.4" height="4" viewBox="0 0 2.4 4" style="position:static;display:inline-block;vertical-align:baseline;margin-right:3.2px;overflow:visible"><path d="M0.2 0 V2.4 H0 L1.2 4 L2.4 2.4 H2.2 V0 Z" fill="#ef6a4a"/></svg>-1.0%</div>
<div style="position:absolute;left:-215.5px;width:600px;text-align:center;top:349.3px;height:40px;line-height:40px;font-size:5.4px;color:#999;font-weight:normal;white-space:nowrap;letter-spacing:0.35px;">コンバージョン</div>
<div style="position:absolute;left:-215.5px;width:600px;text-align:center;top:360.6px;height:40px;line-height:40px;font-size:12.6px;color:#636363;font-weight:normal;white-space:nowrap;">39,648</div>
<div style="position:absolute;left:-215.5px;width:600px;text-align:center;top:371.2px;height:40px;line-height:40px;font-size:6.3px;color:#ef6a4a;font-weight:normal;white-space:nowrap;"><svg width="2.4" height="4" viewBox="0 0 2.4 4" style="position:static;display:inline-block;vertical-align:baseline;margin-right:3.2px;overflow:visible"><path d="M0.2 0 V2.4 H0 L1.2 4 L2.4 2.4 H2.2 V0 Z" fill="#ef6a4a"/></svg>-1.4%</div>
<div style="position:absolute;left:-215.5px;width:600px;text-align:center;top:395.7px;height:40px;line-height:40px;font-size:5.4px;color:#999;font-weight:normal;white-space:nowrap;letter-spacing:0.35px;">CVR</div>
<div style="position:absolute;left:-215.5px;width:600px;text-align:center;top:405.75px;height:40px;line-height:40px;font-size:12.6px;color:#636363;font-weight:normal;white-space:nowrap;">10.22%</div>
<div style="position:absolute;left:-215.5px;width:600px;text-align:center;top:416.4px;height:40px;line-height:40px;font-size:6.3px;color:#ef6a4a;font-weight:normal;white-space:nowrap;"><svg width="2.4" height="4" viewBox="0 0 2.4 4" style="position:static;display:inline-block;vertical-align:baseline;margin-right:3.2px;overflow:visible"><path d="M0.2 0 V2.4 H0 L1.2 4 L2.4 2.4 H2.2 V0 Z" fill="#ef6a4a"/></svg>-1.6%</div>
<div style="position:absolute;left:-215.5px;width:600px;text-align:center;top:443.3px;height:40px;line-height:40px;font-size:5.4px;color:#999;font-weight:normal;white-space:nowrap;letter-spacing:0.35px;">コンバージョン</div>
<div style="position:absolute;left:-215.5px;width:600px;text-align:center;top:454.6px;height:40px;line-height:40px;font-size:12.6px;color:#636363;font-weight:normal;white-space:nowrap;">39,648</div>
<div style="position:absolute;left:-215.5px;width:600px;text-align:center;top:465.2px;height:40px;line-height:40px;font-size:6.3px;color:#ef6a4a;font-weight:normal;white-space:nowrap;"><svg width="2.4" height="4" viewBox="0 0 2.4 4" style="position:static;display:inline-block;vertical-align:baseline;margin-right:3.2px;overflow:visible"><path d="M0.2 0 V2.4 H0 L1.2 4 L2.4 2.4 H2.2 V0 Z" fill="#ef6a4a"/></svg>-1.4%</div>
<div style="position:absolute;left:135px;top:52.5px;height:40px;line-height:40px;font-size:8.4px;color:#666;font-weight:normal;white-space:nowrap;letter-spacing:0.42px;">広告費とコンバージョン数</div>
<div style="position:absolute;left:191.8px;top:78.2px;height:40px;line-height:40px;font-size:7.3px;color:#666;font-weight:normal;white-space:nowrap;">広告費用</div>
<div style="position:absolute;left:246.3px;top:78.2px;height:40px;line-height:40px;font-size:7.1px;color:#666;font-weight:normal;white-space:nowrap;">コンバージョン</div>
<div style="position:absolute;left:-432.5px;width:600px;text-align:right;top:91.7px;height:40px;line-height:40px;font-size:6.8px;color:#666;font-weight:normal;white-space:nowrap;">100万</div>
<div style="position:absolute;left:-432.5px;width:600px;text-align:right;top:120.0px;height:40px;line-height:40px;font-size:6.8px;color:#666;font-weight:normal;white-space:nowrap;">50万</div>
<div style="position:absolute;left:-432.5px;width:600px;text-align:right;top:148.3px;height:40px;line-height:40px;font-size:6.8px;color:#666;font-weight:normal;white-space:nowrap;">0</div>
<div style="position:absolute;left:473px;top:91.7px;height:40px;line-height:40px;font-size:6.8px;color:#666;font-weight:normal;white-space:nowrap;">2,0...</div>
<div style="position:absolute;left:473px;top:120.0px;height:40px;line-height:40px;font-size:6.8px;color:#666;font-weight:normal;white-space:nowrap;">1,5...</div>
<div style="position:absolute;left:473px;top:148.3px;height:40px;line-height:40px;font-size:6.8px;color:#666;font-weight:normal;white-space:nowrap;">1,0...</div>
<div style="position:absolute;left:41px;top:129.8px;width:200px;height:20px;line-height:20px;text-align:center;font-size:6.1px;color:#666;white-space:nowrap;transform:rotate(-90deg);">広告費用</div>
<div style="position:absolute;left:392px;top:129.3px;width:200px;height:20px;line-height:20px;text-align:center;font-size:5.9px;color:#666;white-space:nowrap;transform:rotate(-90deg);">コンバージョン</div>
<div style="position:absolute;left:-121.4px;width:600px;text-align:center;top:156.1px;height:40px;line-height:40px;font-size:6.3px;color:#555;font-weight:normal;white-space:nowrap;letter-spacing:0.2px;">8月12日</div>
<div style="position:absolute;left:-81.84px;width:600px;text-align:center;top:156.1px;height:40px;line-height:40px;font-size:6.3px;color:#555;font-weight:normal;white-space:nowrap;letter-spacing:0.2px;">8月16日</div>
<div style="position:absolute;left:-42.27999999999997px;width:600px;text-align:center;top:156.1px;height:40px;line-height:40px;font-size:6.3px;color:#555;font-weight:normal;white-space:nowrap;letter-spacing:0.2px;">8月20日</div>
<div style="position:absolute;left:-2.7200000000000273px;width:600px;text-align:center;top:156.1px;height:40px;line-height:40px;font-size:6.3px;color:#555;font-weight:normal;white-space:nowrap;letter-spacing:0.2px;">8月24日</div>
<div style="position:absolute;left:36.84000000000003px;width:600px;text-align:center;top:156.1px;height:40px;line-height:40px;font-size:6.3px;color:#555;font-weight:normal;white-space:nowrap;letter-spacing:0.2px;">8月28日</div>
<div style="position:absolute;left:76.39999999999998px;width:600px;text-align:center;top:156.1px;height:40px;line-height:40px;font-size:6.3px;color:#555;font-weight:normal;white-space:nowrap;letter-spacing:0.2px;">9月1日</div>
<div style="position:absolute;left:115.96000000000004px;width:600px;text-align:center;top:156.1px;height:40px;line-height:40px;font-size:6.3px;color:#555;font-weight:normal;white-space:nowrap;letter-spacing:0.2px;">9月5日</div>
<div style="position:absolute;left:155.51999999999998px;width:600px;text-align:center;top:156.1px;height:40px;line-height:40px;font-size:6.3px;color:#555;font-weight:normal;white-space:nowrap;letter-spacing:0.2px;">9月9日</div>
<div style="position:absolute;left:516.6px;top:52.5px;height:40px;line-height:40px;font-size:8.4px;color:#666;font-weight:normal;white-space:nowrap;letter-spacing:0.3px;">表示回数とCPMの推移</div>
<div style="position:absolute;left:573px;top:77.8px;height:40px;line-height:40px;font-size:7.3px;color:#666;font-weight:normal;white-space:nowrap;">表示回数</div>
<div style="position:absolute;left:626px;top:77.8px;height:40px;line-height:40px;font-size:7.6px;color:#666;font-weight:normal;white-space:nowrap;">CPM</div>
<div style="position:absolute;left:-51px;width:600px;text-align:right;top:91.5px;height:40px;line-height:40px;font-size:6.8px;color:#666;font-weight:normal;white-space:nowrap;">200万</div>
<div style="position:absolute;left:-51px;width:600px;text-align:right;top:119.80000000000001px;height:40px;line-height:40px;font-size:6.8px;color:#666;font-weight:normal;white-space:nowrap;">100万</div>
<div style="position:absolute;left:-51px;width:600px;text-align:right;top:148.3px;height:40px;line-height:40px;font-size:6.8px;color:#666;font-weight:normal;white-space:nowrap;">0</div>
<div style="position:absolute;left:421.5px;top:130px;width:200px;height:20px;line-height:20px;text-align:center;font-size:6.1px;color:#666;white-space:nowrap;transform:rotate(-90deg);">表示回数</div>
<div style="position:absolute;left:259.5px;width:600px;text-align:center;top:156.1px;height:40px;line-height:40px;font-size:6.3px;color:#555;font-weight:normal;white-space:nowrap;letter-spacing:0.2px;">8月12日</div>
<div style="position:absolute;left:297.26px;width:600px;text-align:center;top:156.1px;height:40px;line-height:40px;font-size:6.3px;color:#555;font-weight:normal;white-space:nowrap;letter-spacing:0.2px;">8月16日</div>
<div style="position:absolute;left:335.02px;width:600px;text-align:center;top:156.1px;height:40px;line-height:40px;font-size:6.3px;color:#555;font-weight:normal;white-space:nowrap;letter-spacing:0.2px;">8月20日</div>
<div style="position:absolute;left:372.78px;width:600px;text-align:center;top:156.1px;height:40px;line-height:40px;font-size:6.3px;color:#555;font-weight:normal;white-space:nowrap;letter-spacing:0.2px;">8月24日</div>
<div style="position:absolute;left:410.53999999999996px;width:600px;text-align:center;top:156.1px;height:40px;line-height:40px;font-size:6.3px;color:#555;font-weight:normal;white-space:nowrap;letter-spacing:0.2px;">8月28日</div>
<div style="position:absolute;left:448.29999999999995px;width:600px;text-align:center;top:156.1px;height:40px;line-height:40px;font-size:6.3px;color:#555;font-weight:normal;white-space:nowrap;letter-spacing:0.2px;">9月1日</div>
<div style="position:absolute;left:486.05999999999995px;width:600px;text-align:center;top:156.1px;height:40px;line-height:40px;font-size:6.3px;color:#555;font-weight:normal;white-space:nowrap;letter-spacing:0.2px;">9月5日</div>
<div style="position:absolute;left:135.2px;top:192.3px;height:40px;line-height:40px;font-size:8.4px;color:#666;font-weight:normal;white-space:nowrap;letter-spacing:0.4px;">クリック数とCTRの推移</div>
<div style="position:absolute;left:192px;top:217.5px;height:40px;line-height:40px;font-size:7.3px;color:#666;font-weight:normal;white-space:nowrap;">クリック数</div>
<div style="position:absolute;left:252.5px;top:217.5px;height:40px;line-height:40px;font-size:7.6px;color:#666;font-weight:normal;white-space:nowrap;">CTR</div>
<div style="position:absolute;left:-432.5px;width:600px;text-align:right;top:231.2px;height:40px;line-height:40px;font-size:6.8px;color:#666;font-weight:normal;white-space:nowrap;">2万</div>
<div style="position:absolute;left:-432.5px;width:600px;text-align:right;top:259.7px;height:40px;line-height:40px;font-size:6.8px;color:#666;font-weight:normal;white-space:nowrap;">1万</div>
<div style="position:absolute;left:-432.5px;width:600px;text-align:right;top:287.8px;height:40px;line-height:40px;font-size:6.8px;color:#666;font-weight:normal;white-space:nowrap;">0</div>
<div style="position:absolute;left:341.5px;top:231.4px;height:40px;line-height:40px;font-size:7.1px;color:#666;font-weight:normal;white-space:nowrap;">1.5%</div>
<div style="position:absolute;left:341.5px;top:259.8px;height:40px;line-height:40px;font-size:7.1px;color:#666;font-weight:normal;white-space:nowrap;">1%</div>
<div style="position:absolute;left:341.5px;top:288.0px;height:40px;line-height:40px;font-size:7.1px;color:#666;font-weight:normal;white-space:nowrap;">0.5%</div>
<div style="position:absolute;left:44.5px;top:269.5px;width:200px;height:20px;line-height:20px;text-align:center;font-size:6.1px;color:#666;white-space:nowrap;transform:rotate(-90deg);">クリック数</div>
<div style="position:absolute;left:266px;top:269.5px;width:200px;height:20px;line-height:20px;text-align:center;font-size:6.1px;color:#666;white-space:nowrap;transform:rotate(-90deg);">CTR</div>
<div style="position:absolute;left:-124.0px;width:600px;text-align:center;top:296.4px;height:40px;line-height:40px;font-size:6.3px;color:#555;font-weight:normal;white-space:nowrap;letter-spacing:0.2px;">8月12日</div>
<div style="position:absolute;left:-97.05000000000001px;width:600px;text-align:center;top:296.4px;height:40px;line-height:40px;font-size:6.3px;color:#555;font-weight:normal;white-space:nowrap;letter-spacing:0.2px;">8月17日</div>
<div style="position:absolute;left:-70.1px;width:600px;text-align:center;top:296.4px;height:40px;line-height:40px;font-size:6.3px;color:#555;font-weight:normal;white-space:nowrap;letter-spacing:0.2px;">8月22日</div>
<div style="position:absolute;left:-43.14999999999998px;width:600px;text-align:center;top:296.4px;height:40px;line-height:40px;font-size:6.3px;color:#555;font-weight:normal;white-space:nowrap;letter-spacing:0.2px;">8月27日</div>
<div style="position:absolute;left:-16.19999999999999px;width:600px;text-align:center;top:296.4px;height:40px;line-height:40px;font-size:6.3px;color:#555;font-weight:normal;white-space:nowrap;letter-spacing:0.2px;">9月1日</div>
<div style="position:absolute;left:10.75px;width:600px;text-align:center;top:296.4px;height:40px;line-height:40px;font-size:6.3px;color:#555;font-weight:normal;white-space:nowrap;letter-spacing:0.2px;">9月6日</div>
<div style="position:absolute;left:387.3px;top:192.3px;height:40px;line-height:40px;font-size:8.4px;color:#666;font-weight:normal;white-space:nowrap;letter-spacing:0.37px;">コンバージョンとCVRの推移</div>
<div style="position:absolute;left:444.5px;top:217.5px;height:40px;line-height:40px;font-size:7.1px;color:#666;font-weight:normal;white-space:nowrap;">コンバージョン</div>
<div style="position:absolute;left:519.5px;top:217.5px;height:40px;line-height:40px;font-size:7.6px;color:#666;font-weight:normal;white-space:nowrap;">CVR</div>
<div style="position:absolute;left:-179.5px;width:600px;text-align:right;top:231.2px;height:40px;line-height:40px;font-size:6.8px;color:#666;font-weight:normal;white-space:nowrap;">2,000</div>
<div style="position:absolute;left:-179.5px;width:600px;text-align:right;top:259.7px;height:40px;line-height:40px;font-size:6.8px;color:#666;font-weight:normal;white-space:nowrap;">1,000</div>
<div style="position:absolute;left:-179.5px;width:600px;text-align:right;top:287.8px;height:40px;line-height:40px;font-size:6.8px;color:#666;font-weight:normal;white-space:nowrap;">0</div>
<div style="position:absolute;left:293.7px;top:269.5px;width:200px;height:20px;line-height:20px;text-align:center;font-size:6.1px;color:#666;white-space:nowrap;transform:rotate(-90deg);">コンバージョン</div>
<div style="position:absolute;left:521px;top:269.5px;width:200px;height:20px;line-height:20px;text-align:center;font-size:6.1px;color:#666;white-space:nowrap;transform:rotate(-90deg);">CVR</div>
<div style="position:absolute;left:128.75px;width:600px;text-align:center;top:296.4px;height:40px;line-height:40px;font-size:6.3px;color:#555;font-weight:normal;white-space:nowrap;letter-spacing:0.2px;">8月12日</div>
<div style="position:absolute;left:159.60000000000002px;width:600px;text-align:center;top:296.4px;height:40px;line-height:40px;font-size:6.3px;color:#555;font-weight:normal;white-space:nowrap;letter-spacing:0.2px;">8月17日</div>
<div style="position:absolute;left:190.45px;width:600px;text-align:center;top:296.4px;height:40px;line-height:40px;font-size:6.3px;color:#555;font-weight:normal;white-space:nowrap;letter-spacing:0.2px;">8月22日</div>
<div style="position:absolute;left:221.30000000000007px;width:600px;text-align:center;top:296.4px;height:40px;line-height:40px;font-size:6.3px;color:#555;font-weight:normal;white-space:nowrap;letter-spacing:0.2px;">8月27日</div>
<div style="position:absolute;left:252.1500000000001px;width:600px;text-align:center;top:296.4px;height:40px;line-height:40px;font-size:6.3px;color:#555;font-weight:normal;white-space:nowrap;letter-spacing:0.2px;">9月1日</div>
<div style="position:absolute;left:283.0px;width:600px;text-align:center;top:296.4px;height:40px;line-height:40px;font-size:6.3px;color:#555;font-weight:normal;white-space:nowrap;letter-spacing:0.2px;">9月6日</div>
<div style="position:absolute;left:640.6px;top:192.3px;height:40px;line-height:40px;font-size:8.4px;color:#666;font-weight:normal;white-space:nowrap;letter-spacing:0.22px;">CPAとCPCの推移</div>
<div style="position:absolute;left:697px;top:218.4px;height:40px;line-height:40px;font-size:7.6px;color:#666;font-weight:normal;white-space:nowrap;">CPA</div>
<div style="position:absolute;left:735px;top:218.4px;height:40px;line-height:40px;font-size:7.6px;color:#666;font-weight:normal;white-space:nowrap;">CPC</div>
<div style="position:absolute;left:72.79999999999995px;width:600px;text-align:right;top:231.1px;height:40px;line-height:40px;font-size:6.8px;color:#666;font-weight:normal;white-space:nowrap;">1,000</div>
<div style="position:absolute;left:72.79999999999995px;width:600px;text-align:right;top:259.7px;height:40px;line-height:40px;font-size:6.8px;color:#666;font-weight:normal;white-space:nowrap;">500</div>
<div style="position:absolute;left:72.79999999999995px;width:600px;text-align:right;top:287.8px;height:40px;line-height:40px;font-size:6.8px;color:#666;font-weight:normal;white-space:nowrap;">0</div>
<div style="position:absolute;left:546.8px;top:269.7px;width:200px;height:20px;line-height:20px;text-align:center;font-size:6.1px;color:#666;white-space:nowrap;transform:rotate(-90deg);">CPA</div>
<div style="position:absolute;left:378.1px;width:600px;text-align:center;top:296.4px;height:40px;line-height:40px;font-size:6.3px;color:#555;font-weight:normal;white-space:nowrap;letter-spacing:0.2px;">8月12日</div>
<div style="position:absolute;left:408.05000000000007px;width:600px;text-align:center;top:296.4px;height:40px;line-height:40px;font-size:6.3px;color:#555;font-weight:normal;white-space:nowrap;letter-spacing:0.2px;">8月17日</div>
<div style="position:absolute;left:438.0px;width:600px;text-align:center;top:296.4px;height:40px;line-height:40px;font-size:6.3px;color:#555;font-weight:normal;white-space:nowrap;letter-spacing:0.2px;">8月22日</div>
<div style="position:absolute;left:467.95000000000005px;width:600px;text-align:center;top:296.4px;height:40px;line-height:40px;font-size:6.3px;color:#555;font-weight:normal;white-space:nowrap;letter-spacing:0.2px;">8月27日</div>
<div style="position:absolute;left:497.9000000000001px;width:600px;text-align:center;top:296.4px;height:40px;line-height:40px;font-size:6.3px;color:#555;font-weight:normal;white-space:nowrap;letter-spacing:0.2px;">9月1日</div>
<div style="position:absolute;left:135px;top:332.0px;height:40px;line-height:40px;font-size:8.4px;color:#666;font-weight:normal;white-space:nowrap;letter-spacing:0.45px;">メディア別内訳</div>
<div style="position:absolute;left:190px;top:352.4px;height:40px;line-height:40px;font-size:7.5px;color:#555;font-weight:normal;white-space:nowrap;">X</div>
<div style="position:absolute;left:207px;top:352.4px;height:40px;line-height:40px;font-size:7.5px;color:#555;font-weight:normal;white-space:nowrap;">Google その他</div>
<div style="position:absolute;left:272px;top:352.4px;height:40px;line-height:40px;font-size:7.5px;color:#555;font-weight:normal;white-space:nowrap;">Meta</div>
<div style="position:absolute;left:-28px;width:600px;text-align:center;top:393.7px;height:40px;line-height:40px;font-size:6.8px;color:#333;font-weight:normal;white-space:nowrap;">34.5%</div>
<div style="position:absolute;left:-95.80000000000001px;width:600px;text-align:center;top:391.6px;height:40px;line-height:40px;font-size:6.8px;color:#333;font-weight:normal;white-space:nowrap;">32.4%</div>
<div style="position:absolute;left:-65px;width:600px;text-align:center;top:451.0px;height:40px;line-height:40px;font-size:6.8px;color:#ffffff;font-weight:normal;white-space:nowrap;">33.1%</div>
<div style="position:absolute;left:-67.69999999999999px;width:600px;text-align:center;top:404.2px;height:40px;line-height:40px;font-size:5.4px;color:#999;font-weight:normal;white-space:nowrap;letter-spacing:0.2px;">広告費</div>
<div style="position:absolute;left:-63.80000000000001px;width:600px;text-align:center;top:415.8px;height:40px;line-height:40px;font-size:12.9px;color:#6c6c6c;font-weight:normal;white-space:nowrap;">20,355,182</div>
<div style="position:absolute;left:346.8px;top:332.0px;height:40px;line-height:40px;font-size:8.4px;color:#666;font-weight:normal;white-space:nowrap;letter-spacing:0.45px;">メディア別</div>
<div style="position:absolute;left:350px;top:349.8px;height:40px;line-height:40px;font-size:8.4px;color:#333;font-weight:bold;white-space:nowrap;letter-spacing:0.3px;">メディア</div>
<div style="position:absolute;left:-92.30000000000001px;width:600px;text-align:right;top:349.8px;height:40px;line-height:40px;font-size:8.4px;color:#333;font-weight:bold;white-space:nowrap;letter-spacing:0.35px;">表示回数</div>
<div style="position:absolute;left:9.5px;width:600px;text-align:right;top:349.8px;height:40px;line-height:40px;font-size:8.4px;color:#333;font-weight:bold;white-space:nowrap;letter-spacing:0.35px;">クリック数</div>
<div style="position:absolute;left:99px;width:600px;text-align:right;top:349.8px;height:40px;line-height:40px;font-size:8.4px;color:#333;font-weight:bold;white-space:nowrap;letter-spacing:0.35px;">広告費</div>
<div style="position:absolute;left:188.5px;width:600px;text-align:right;top:349.8px;height:40px;line-height:40px;font-size:8.4px;color:#333;font-weight:bold;white-space:nowrap;letter-spacing:0.4px;">コンバージョン</div>
<div style="position:absolute;left:350px;top:367.05px;height:40px;line-height:40px;font-size:7.6px;color:#666;font-weight:normal;white-space:nowrap;">Google その他</div>
<div style="position:absolute;left:-80.25px;width:600px;text-align:right;top:367.05px;height:40px;line-height:40px;font-size:7.6px;color:#666;font-weight:normal;white-space:nowrap;letter-spacing:0.45px;">13,318,414</div>
<div style="position:absolute;left:9.650000000000091px;width:600px;text-align:right;top:367.05px;height:40px;line-height:40px;font-size:7.6px;color:#e0e9f4;font-weight:normal;white-space:nowrap;letter-spacing:0.45px;">131,173</div>
<div style="position:absolute;left:99.15000000000009px;width:600px;text-align:right;top:367.05px;height:40px;line-height:40px;font-size:7.6px;color:#666;font-weight:normal;white-space:nowrap;letter-spacing:0.45px;">6,735,809</div>
<div style="position:absolute;left:188.6500000000001px;width:600px;text-align:right;top:367.05px;height:40px;line-height:40px;font-size:7.6px;color:#666;font-weight:normal;white-space:nowrap;letter-spacing:0.45px;">13,233</div>
<div style="position:absolute;left:350px;top:384.25px;height:40px;line-height:40px;font-size:7.6px;color:#666;font-weight:normal;white-space:nowrap;">Meta</div>
<div style="position:absolute;left:-80.25px;width:600px;text-align:right;top:384.25px;height:40px;line-height:40px;font-size:7.6px;color:#666;font-weight:normal;white-space:nowrap;letter-spacing:0.45px;">13,205,067</div>
<div style="position:absolute;left:9.650000000000091px;width:600px;text-align:right;top:384.25px;height:40px;line-height:40px;font-size:7.6px;color:#222;font-weight:normal;white-space:nowrap;letter-spacing:0.45px;">123,585</div>
<div style="position:absolute;left:99.15000000000009px;width:600px;text-align:right;top:384.25px;height:40px;line-height:40px;font-size:7.6px;color:#666;font-weight:normal;white-space:nowrap;letter-spacing:0.45px;">6,598,963</div>
<div style="position:absolute;left:188.6500000000001px;width:600px;text-align:right;top:384.25px;height:40px;line-height:40px;font-size:7.6px;color:#666;font-weight:normal;white-space:nowrap;letter-spacing:0.45px;">13,228</div>
<div style="position:absolute;left:350px;top:401.79999999999995px;height:40px;line-height:40px;font-size:7.6px;color:#666;font-weight:normal;white-space:nowrap;">X</div>
<div style="position:absolute;left:-80.25px;width:600px;text-align:right;top:401.79999999999995px;height:40px;line-height:40px;font-size:7.6px;color:#666;font-weight:normal;white-space:nowrap;letter-spacing:0.45px;">13,134,569</div>
<div style="position:absolute;left:9.650000000000091px;width:600px;text-align:right;top:401.79999999999995px;height:40px;line-height:40px;font-size:7.6px;color:#e0e9f4;font-weight:normal;white-space:nowrap;letter-spacing:0.45px;">133,220</div>
<div style="position:absolute;left:99.15000000000009px;width:600px;text-align:right;top:401.79999999999995px;height:40px;line-height:40px;font-size:7.6px;color:#666;font-weight:normal;white-space:nowrap;letter-spacing:0.45px;">7,020,410</div>
<div style="position:absolute;left:188.6500000000001px;width:600px;text-align:right;top:401.79999999999995px;height:40px;line-height:40px;font-size:7.6px;color:#666;font-weight:normal;white-space:nowrap;letter-spacing:0.45px;">13,187</div>
<div style="position:absolute;left:350px;top:445.2px;height:40px;line-height:40px;font-size:8px;color:#666;font-weight:bold;white-space:nowrap;">総計</div>
<div style="position:absolute;left:-80.0px;width:600px;text-align:right;top:445.3px;height:40px;line-height:40px;font-size:8.2px;color:#666;font-weight:bold;white-space:nowrap;letter-spacing:0.5px;">39,658,050</div>
<div style="position:absolute;left:9.700000000000045px;width:600px;text-align:right;top:445.3px;height:40px;line-height:40px;font-size:8.2px;color:#666;font-weight:bold;white-space:nowrap;letter-spacing:0.5px;">387,978</div>
<div style="position:absolute;left:99.20000000000005px;width:600px;text-align:right;top:445.3px;height:40px;line-height:40px;font-size:8.2px;color:#666;font-weight:bold;white-space:nowrap;letter-spacing:0.5px;">20,355,182</div>
<div style="position:absolute;left:188.70000000000005px;width:600px;text-align:right;top:445.3px;height:40px;line-height:40px;font-size:8.2px;color:#666;font-weight:bold;white-space:nowrap;letter-spacing:0.5px;">39,648</div>
</div>
<div style="position:absolute;left:4px;top:0px;width:1px;height:500px;background:#fafbfc;border-radius:0px;"></div>
<div style="position:absolute;left:0px;top:499px;width:798px;height:1px;background:#fafbfc;border-radius:0px;"></div>
<div style="position:absolute;left:0px;top:0px;width:4px;height:508px;background:#000;border-radius:0px;"></div>
<div style="position:absolute;left:794px;top:0px;width:4px;height:508px;background:#000;border-radius:0px;"></div>
<div style="position:absolute;left:0px;top:500px;width:798px;height:8px;background:#000;border-radius:0px;"></div>
</body></html>
